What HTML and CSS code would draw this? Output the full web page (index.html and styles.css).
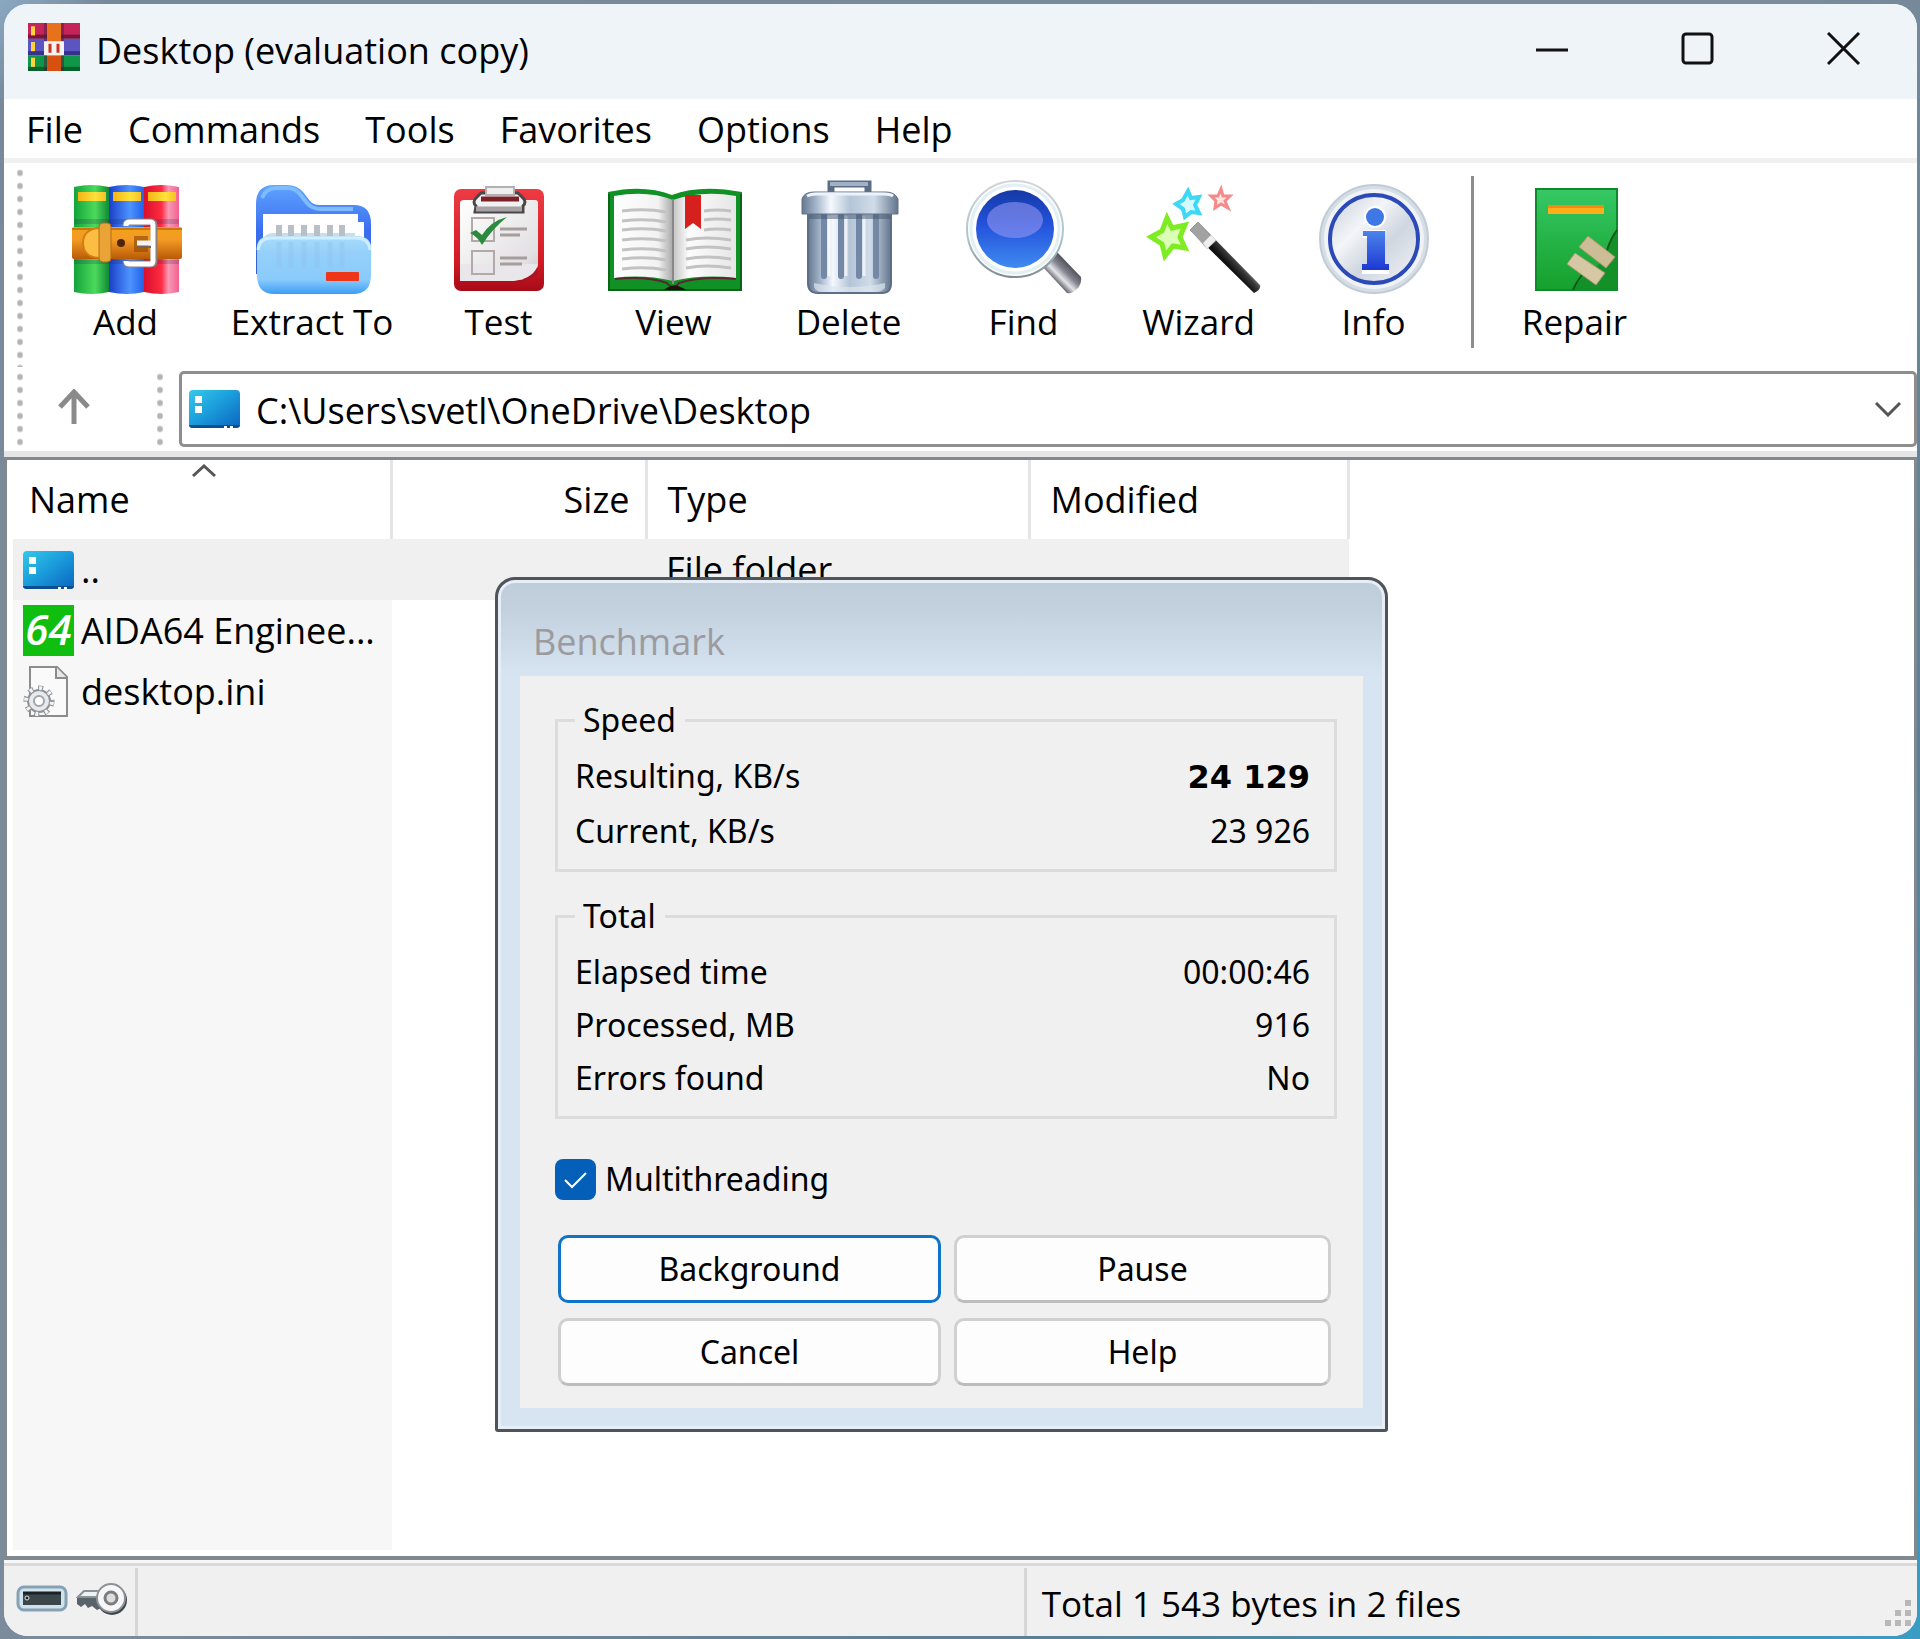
FILE: index.html
```html
<!DOCTYPE html>
<html lang="en">
<head>
    <meta charset="UTF-8">
    <meta name="viewport" content="width=device-width, initial-scale=1.0">
    <title>Desktop (evaluation copy)</title>
    <link rel="stylesheet" href="styles.css">
</head>
<body>
    <div class="window">
        <header class="title-bar">
            <svg class="app-icon" viewBox="0 0 52 58" preserveAspectRatio="none">
                <rect width="52" height="19" fill="#c4245a"/>
                <rect y="14" width="52" height="5" fill="#7d1237"/>
                <rect y="19" width="52" height="20" fill="#5a55c0"/>
                <rect y="34" width="52" height="5" fill="#37318a"/>
                <rect y="39" width="52" height="19" fill="#109648"/>
                <rect y="53" width="52" height="5" fill="#06602a"/>
                <rect x="3" y="4" width="4" height="11" fill="#ffd23c"/>
                <rect x="3" y="23" width="4" height="11" fill="#ffd23c"/>
                <rect x="3" y="42" width="4" height="11" fill="#ffd23c"/>
                <rect x="16" width="20" height="58" fill="#4a1c3c" opacity=".5"/>
                <rect x="19" width="14" height="58" fill="#e8721c"/>
                <rect x="19" y="40" width="14" height="18" fill="#d65010"/>
                <path d="M16 22h4v12h12V22h4v17H16z" fill="#f6f2f2"/>
                <path d="M20 22h12v14H20z" fill="#f6f2f2"/>
                <path d="M22 36V25M30 36V25" fill="none" stroke="#c8321e" stroke-width="3"/>
            </svg>
            <h1>Desktop (evaluation copy)</h1>
            <div class="window-buttons">
                <button type="button" aria-label="Minimize"><svg viewBox="0 0 34 34"><path d="M1 18h32"/></svg></button>
                <button type="button" aria-label="Maximize"><svg viewBox="0 0 34 34"><rect x="2" y="2" width="29" height="29" rx="3"/></svg></button>
                <button type="button" aria-label="Close"><svg viewBox="0 0 34 34"><path d="M1 1l31 31M32 1L1 32"/></svg></button>
            </div>
        </header>

        <nav class="menu">
            <button type="button">File</button>
            <button type="button">Commands</button>
            <button type="button">Tools</button>
            <button type="button">Favorites</button>
            <button type="button">Options</button>
            <button type="button">Help</button>
        </nav>

        <div class="toolbar">
            <div class="grip"></div>
            <button type="button" class="tool">
                <svg viewBox="0 0 140 115">
                    <defs>
                        <linearGradient id="bookGreen"><stop offset="0" stop-color="#12a33a"/><stop offset=".6" stop-color="#4cda5c"/><stop offset="1" stop-color="#118a35"/></linearGradient>
                        <linearGradient id="bookBlue"><stop offset="0" stop-color="#1b3fc8"/><stop offset=".6" stop-color="#4c94ff"/><stop offset="1" stop-color="#2360e8"/></linearGradient>
                        <linearGradient id="bookRed"><stop offset="0" stop-color="#d80f2c"/><stop offset=".5" stop-color="#ff2c42"/><stop offset=".7" stop-color="#f79ab8"/><stop offset="1" stop-color="#f4608c"/></linearGradient>
                        <linearGradient id="belt" x2="0" y2="1"><stop offset="0" stop-color="#f2a21c"/><stop offset=".4" stop-color="#f39a24"/><stop offset="1" stop-color="#b95a06"/></linearGradient>
                        <linearGradient id="gold" gradientUnits="userSpaceOnUse" x1="22" y1="0" x2="57" y2="0" spreadMethod="repeat"><stop offset="0" stop-color="#f4b414"/><stop offset=".5" stop-color="#ffe23c"/><stop offset="1" stop-color="#f0a818"/></linearGradient>
                    </defs>
                    <path d="M18 7q17-4 35 0v105q-17 4-35 0z" fill="url(#bookGreen)"/>
                    <path d="M53 7q17-4 35 0v105q-17 4-35 0z" fill="url(#bookBlue)"/>
                    <path d="M88 7q17-4 35 0v105q-17 4-35 0z" fill="url(#bookRed)"/>
                    <path d="M22 12h28v9H22zM57 12h28v9H57zM92 12h28v9H92z" fill="url(#gold)"/>
                    <path d="M18 44h105v-5H18zM18 80h105v4H18z" fill="#202050" opacity=".2"/>
                    <rect x="16" y="47" width="110" height="32" rx="2" fill="url(#belt)"/>
                    <path d="M16 49h110" stroke="#c87808" stroke-width="2"/>
                    <path d="M44 48c-11 0-17 6-17 15s6 15 17 15z" fill="#fbbd42" stroke="#d47c10" stroke-width="2"/>
                    <rect x="43" y="43" width="12" height="39" rx="4" fill="#eaa337" stroke="#b96b10" stroke-width="1"/>
                    <circle cx="65" cy="63" r="4" fill="#502506"/>
                    <path d="M78 56h14v16H78z" fill="#8e4306" opacity=".6"/>
                    <path d="M70 46v-1q0-3 4-3h21q3 0 3 3v36q0 3-3 3H74q-4 0-4-3" fill="none" stroke="#8c7f80" stroke-width="7"/>
                    <path d="M70 46v-1q0-3 4-3h20q3 0 3 3v36q0 3-3 3H74q-4 0-4-3" fill="none" stroke="#fff" stroke-width="5"/>
                    <path d="M81 63h15" stroke="#f4f4f4" stroke-width="5"/>
                    <path d="M81 67h14" stroke="#77625a" stroke-width="2"/>
                </svg>
                <span>Add</span>
            </button>
            <button type="button" class="tool tool-wide">
                <svg viewBox="0 0 140 115">
                    <defs>
                        <linearGradient id="folderBack" x2="0" y2="1"><stop offset="0" stop-color="#5ea4ff"/><stop offset=".5" stop-color="#3c6ff0"/><stop offset="1" stop-color="#2d5ce4"/></linearGradient>
                        <linearGradient id="folderFront" x2="0" y2="1"><stop offset="0" stop-color="#a8dcfb"/><stop offset=".3" stop-color="#94d0fa"/><stop offset=".75" stop-color="#8acbfc"/><stop offset="1" stop-color="#3c9df4"/></linearGradient>
                    </defs>
                    <path d="M14 94V24Q14 5 32 5h13q10 0 16 7l7 9q3 4 10 4h34q17 0 17 19v50z" fill="url(#folderBack)"/>
                    <path d="M20 18q4-10 14-10h11q8 0 13 6l7 9q5 6 14 6h32" fill="none" stroke="#7fbcff" stroke-width="4"/>
                    <path d="M21 34h95v8h6v25H21z" fill="#fff"/>
                    <path d="M21 60q2-7 10-7h82v12H21z" fill="#cfdbe6"/>
                    <path d="M37 45v12M49 45v12M62 45v12M75 45v12M88 45v12M100 45v12" stroke="#b9bfc6" stroke-width="6"/>
                    <path d="M15 68q0-12 14-12h85q15 0 15 12v27q0 19-18 19H32q-17 0-17-19z" fill="url(#folderFront)"/>
                    <path d="M16 70q1-12 13-12h85q13 0 14 12" fill="none" stroke="#cfeeff" stroke-width="3"/>
                    <path d="M37 62v26M49 62v26M62 62v26M75 62v26M88 62v26M100 62v26" stroke="#8fc6ee" stroke-width="5" opacity=".5"/>
                    <rect x="84" y="92" width="33" height="9" rx="1" fill="#ee3517"/>
                </svg>
                <span>Extract To</span>
            </button>
            <button type="button" class="tool">
                <svg viewBox="0 0 140 115">
                    <defs>
                        <linearGradient id="paper" x2="1" y2="1"><stop offset="0" stop-color="#fff"/><stop offset=".8" stop-color="#e2e0e2"/><stop offset="1" stop-color="#c8c4c6"/></linearGradient>
                        <linearGradient id="board" x2="0" y2="1"><stop offset="0" stop-color="#ee3b42"/><stop offset=".7" stop-color="#d31b26"/><stop offset="1" stop-color="#a70b18"/></linearGradient>
                    </defs>
                    <rect x="25" y="9" width="90" height="102" rx="7" fill="url(#board)"/>
                    <path d="M31 101V23q0-3 4-3h71q3 0 3 3v64L93 100z" fill="url(#paper)"/>
                    <path d="M109 84v10q-9 7-24 8l-54-1" fill="#7d1a20" opacity=".3"/>
                    <path d="M31 84h78q-3 14-24 17H31z" fill="#e9e7e9"/>
                    <path d="M47 26q-4-4 0-8l5-5h37l5 5q4 4 0 8v6H46z" fill="#f1f1f1" stroke="#4b4648" stroke-width="3"/>
                    <path d="M52 19h38" stroke="#7e2028" stroke-width="5"/>
                    <path d="M57 7h28v8H57z" fill="#efefef" stroke="#b2b0b2" stroke-width="2"/>
                    <path d="M47 29h46" stroke="#a5a1a4" stroke-width="5"/>
                    <path d="M43 38h22v23H43zM43 71h22v23H43z" fill="none" stroke="#b3a9aa" stroke-width="2"/>
                    <path d="M71 49h27M71 55h20M71 78h27M71 84h22" stroke="#a79c9e" stroke-width="3"/>
                    <path d="M41 53l6-3 6 5Q62 41 78 37 63 49 53 65q-4-8-12-12z" fill="#2c8a3e"/>
                </svg>
                <span>Test</span>
            </button>
            <button type="button" class="tool">
                <svg viewBox="0 0 140 115">
                    <defs>
                        <linearGradient id="pageLeft"><stop offset="0" stop-color="#fff"/><stop offset=".75" stop-color="#f2f2f2"/><stop offset="1" stop-color="#a8a8a8"/></linearGradient>
                        <linearGradient id="pageRight"><stop offset="0" stop-color="#c4c4c4"/><stop offset=".25" stop-color="#fcfcfc"/><stop offset="1" stop-color="#e6e6e6"/></linearGradient>
                    </defs>
                    <path d="M4 12q36-8 64 3 28-11 70-3v99H4z" fill="#119125"/>
                    <path d="M5 14v97M137 14v97M4 110h134" stroke="#0a6417" stroke-width="2"/>
                    <path d="M10 16q34-6 59 4v81q-30-7-59-3z" fill="url(#pageLeft)"/>
                    <path d="M132 16q-34-6-63 4v81q30-7 63-3z" fill="url(#pageRight)"/>
                    <path d="M11 99q32-3 52 4 3 4 6 4t6-4q22-7 57-4" fill="none" stroke="#5b2630" stroke-width="2"/>
                    <path d="M60 110q10-9 22 0z" fill="#24100e"/>
                    <path d="M69 19v85" stroke="#888" stroke-width="2"/>
                    <path d="M18 31q24-3 44 1M18 41q24-3 44 1M18 50q24-3 44 1M18 60q24-3 44 1M18 70q24-3 44 1M18 79q24-3 44 1M18 89q24-3 44 1M100 31q12-2 27 0M100 40q12-2 27 0M100 50q12-2 27 0M82 60q20-4 45 0M82 69q20-4 45 0M82 79q20-4 45 0M82 88q20-4 45 0" fill="none" stroke="#c2c2c2" stroke-width="3"/>
                    <path d="M81 15h16v34l-8-6-8 6z" fill="#d6201d"/>
                </svg>
                <span>View</span>
            </button>
            <button type="button" class="tool">
                <svg viewBox="0 0 140 115">
                    <defs>
                        <linearGradient id="metal"><stop offset="0" stop-color="#64788f"/><stop offset=".15" stop-color="#a5b6cb"/><stop offset=".3" stop-color="#f5f9fd"/><stop offset=".5" stop-color="#b4c4d7"/><stop offset=".75" stop-color="#d0dce9"/><stop offset="1" stop-color="#63758d"/></linearGradient>
                    </defs>
                    <path d="M52 13V4h37v9" fill="none" stroke="#5b6d85" stroke-width="7"/>
                    <path d="M51 4h38" stroke="#a2b2c6" stroke-width="4"/>
                    <path d="M29 33h83v70q0 10-9 10H39q-10 0-10-10z" fill="url(#metal)" stroke="#5d6f88" stroke-width="2"/>
                    <path d="M35 103q36 8 71 0v5q-4 4-10 4H44q-7 0-9-5z" fill="#dce5ef" opacity=".7"/>
                    <path d="M45 34v62M62 34v62M80 34v62M97 34v62" stroke="#7388a5" stroke-width="6" stroke-linecap="round"/>
                    <path d="M50 36v60M67 36v60M85 36v60" stroke="#fff" stroke-width="3" opacity=".7"/>
                    <path d="M30 32h81v7H30z" fill="#44566e" opacity=".5"/>
                    <path d="M23 19q2-7 12-7h72q9 0 12 7v15H23z" fill="url(#metal)" stroke="#61738a" stroke-width="1"/>
                    <path d="M28 16q4-2 9-2h68q6 0 9 2" stroke="#eef3f9" stroke-width="3" fill="none"/>
                </svg>
                <span>Delete</span>
            </button>
            <button type="button" class="tool">
                <svg viewBox="0 0 140 115">
                    <defs>
                        <linearGradient id="lens" x2="0" y2="1"><stop offset="0" stop-color="#1439a8"/><stop offset=".45" stop-color="#2452dc"/><stop offset="1" stop-color="#3f8bf0"/></linearGradient>
                        <linearGradient id="lensRim" x2="0" y2="1"><stop offset="0" stop-color="#d4d4d8"/><stop offset=".6" stop-color="#a9c5ce"/><stop offset="1" stop-color="#848c92"/></linearGradient>
                        <linearGradient id="handle" gradientUnits="userSpaceOnUse" x1="122" y1="90" x2="106" y2="106"><stop offset="0" stop-color="#4b4b55"/><stop offset=".4" stop-color="#85858f"/><stop offset=".7" stop-color="#e4e4ea"/><stop offset="1" stop-color="#606069"/></linearGradient>
                    </defs>
                    <path d="M87 85l15-14 25 26q1 7-4 12t-10 4z" fill="url(#handle)"/>
                    <circle cx="61" cy="49" r="48" fill="#fdfefe" stroke="url(#lensRim)" stroke-width="2"/>
                    <circle cx="61" cy="49" r="44" fill="#fff" stroke="#e2eff3" stroke-width="3"/>
                    <circle cx="61" cy="49" r="39" fill="url(#lens)"/>
                    <ellipse cx="61" cy="40" rx="28" ry="18" fill="#9c9cf0" opacity=".55"/>
                </svg>
                <span>Find</span>
            </button>
            <button type="button" class="tool">
                <svg viewBox="0 0 140 115">
                    <defs>
                        <linearGradient id="wand" gradientUnits="userSpaceOnUse" x1="100" y1="68" x2="91" y2="76"><stop offset="0" stop-color="#7c7c7c"/><stop offset=".4" stop-color="#3a3a3a"/><stop offset="1" stop-color="#111"/></linearGradient>
                    </defs>
                    <path d="M61 50l8-8 62 63q1 5-6 8z" fill="url(#wand)"/>
                    <path d="M61 50l8-8 18 19-9 8z" fill="#a2a2a2"/>
                    <path d="M74 63l8-8 5 5-9 9z" fill="#eee"/>
                    <path d="M38 38l5 10 13-3-5 12 5 11-12-2-8 10-3-12-11-7 11-6z" fill="#dcffb8" stroke="#7eec22" stroke-width="5"/>
                    <path d="M59 11l3 7 8-1-4 8 4 8-8-1-6 5-2-8-7-5 7-4z" fill="#d5faff" stroke="#3cd8f5" stroke-width="4"/>
                    <path d="M92 9l2 7h7l-5 5 3 7-7-4-6 4 1-7-5-5h7z" fill="#ffe4e4" stroke="#f48a8a" stroke-width="3"/>
                </svg>
                <span>Wizard</span>
            </button>
            <button type="button" class="tool">
                <svg viewBox="0 0 140 115">
                    <defs>
                        <linearGradient id="infoPlate" x2="1" y2="1"><stop offset="0" stop-color="#c9d0da"/><stop offset=".35" stop-color="#f3f5f8"/><stop offset=".6" stop-color="#cfd6df"/><stop offset="1" stop-color="#f4f6f8"/></linearGradient>
                        <linearGradient id="infoMark" x2="0" y2="1"><stop offset="0" stop-color="#4c84ec"/><stop offset="1" stop-color="#1d38d2"/></linearGradient>
                    </defs>
                    <circle cx="70" cy="59" r="54" fill="#d5dde5" stroke="#c2ccd6" stroke-width="2"/>
                    <circle cx="70" cy="59" r="50" fill="#eff3f6"/>
                    <circle cx="70" cy="59" r="44" fill="url(#infoPlate)" stroke="#2b4ab8" stroke-width="4"/>
                    <circle cx="71" cy="37" r="11" fill="#fff"/>
                    <circle cx="71" cy="37" r="9" fill="#3f78e4"/>
                    <path d="M59 50h22v35h4v9H58v-8h5V58h-4z" fill="#fff"/>
                    <path d="M59 51h22v33h4v6H58v-6h5V56h-4z" fill="url(#infoMark)"/>
                </svg>
                <span>Info</span>
            </button>
            <div class="tool-divider"></div>
            <button type="button" class="tool">
                <svg viewBox="0 0 140 115">
                    <defs>
                        <linearGradient id="repairBook" x2="0" y2="1"><stop offset="0" stop-color="#35c865"/><stop offset="1" stop-color="#16a02c"/></linearGradient>
                    </defs>
                    <rect x="31" y="9" width="81" height="101" fill="url(#repairBook)" stroke="#0f8a2c" stroke-width="2"/>
                    <path d="M43 25h56v9H43z" fill="#ffae17"/>
                    <path d="M43 25h56v3H43z" fill="#f28a12"/>
                    <path d="M112 50q-6 8-10 20-5 15-20 24-9 6-13 16h43z" fill="#149028"/>
                    <path d="M112 50q-6 8-10 20M82 90q-9 8-14 20" fill="none" stroke="#0a5a18" stroke-width="2"/>
                    <path d="M83 56l27 21-9 11-27-21z" fill="#cdbd97" stroke="#a9976c" stroke-width="1"/>
                    <path d="M70 73l30 20-9 12-29-21z" fill="#d6c8a4" stroke="#a9976c" stroke-width="1"/>
                </svg>
                <span>Repair</span>
            </button>
        </div>

        <div class="address-bar">
            <div class="grip"></div>
            <button type="button" class="up" aria-label="Up one level">
                <svg viewBox="0 0 32 36"><path d="M16 35V3M2 18L16 3l14 15"/></svg>
            </button>
            <div class="grip"></div>
            <div class="path-box">
                <svg class="folder-icon" viewBox="0 0 51 38">
                    <defs>
                        <linearGradient id="desk" x2="1" y2="1"><stop offset="0" stop-color="#35c9ea"/><stop offset=".45" stop-color="#1c9fdc"/><stop offset="1" stop-color="#0a64c0"/></linearGradient>
                    </defs>
                    <rect width="51" height="38" rx="4" fill="url(#desk)"/>
                    <path d="M0 35h51q0 3-4 3H4q-4 0-4-3z" fill="#0b4f93"/>
                    <path d="M6 6h7v7H6zM6 16h7v7H6z" fill="#fff"/>
                    <path d="M35 36h3v2h-3zM41 36h3v2h-3z" fill="#fff"/>
                </svg>
                <select aria-label="Path">
                    <option>C:\Users\svetl\OneDrive\Desktop</option>
                </select>
                <svg class="chevron" viewBox="0 0 28 16"><path d="M2 2l12 12L26 2"/></svg>
            </div>
        </div>

        <main class="file-list">
            <table>
                <thead>
                    <tr>
                        <th class="col-name">Name
                            <svg class="sort-mark" viewBox="0 0 26 14"><path d="M2 12L13 2l11 10"/></svg>
                        </th>
                        <th class="col-size">Size</th>
                        <th class="col-type">Type</th>
                        <th class="col-modified">Modified</th>
                    </tr>
                </thead>
                <tbody>
                    <tr class="current">
                        <td>
                            <div class="file-name">
                                <svg class="folder-icon" viewBox="0 0 51 38">
                                    <rect width="51" height="38" rx="4" fill="url(#desk)"/>
                                    <path d="M0 35h51q0 3-4 3H4q-4 0-4-3z" fill="#0b4f93"/>
                                    <path d="M6 6h7v7H6zM6 16h7v7H6z" fill="#fff"/>
                                    <path d="M35 36h3v2h-3zM41 36h3v2h-3z" fill="#fff"/>
                                </svg>
                                <span>..</span>
                            </div>
                        </td>
                        <td></td>
                        <td>File folder</td>
                        <td></td>
                    </tr>
                    <tr>
                        <td>
                            <div class="file-name">
                                <span class="icon-64">64</span>
                                <span>AIDA64 Enginee...</span>
                            </div>
                        </td>
                        <td></td>
                        <td></td>
                        <td></td>
                    </tr>
                    <tr>
                        <td>
                            <div class="file-name">
                                <svg class="ini-icon" viewBox="0 0 51 51">
                                    <path d="M7 1h27l10 10v39H7z" fill="#fafafa" stroke="#8c8c8c" stroke-width="2"/>
                                    <path d="M33 1v11h11" fill="#e8e8e8" stroke="#8c8c8c" stroke-width="2"/>
                                    <circle cx="16" cy="35" r="13" fill="none" stroke="#8d9296" stroke-width="5" stroke-dasharray="5 5"/>
                                    <circle cx="16" cy="35" r="11" fill="#e6eaec" stroke="#8d9296" stroke-width="2"/>
                                    <circle cx="16" cy="35" r="13" fill="none" stroke="#f0f2f3" stroke-width="4" stroke-dasharray="3 7" stroke-dashoffset="-1"/>
                                    <circle cx="16" cy="35" r="5" fill="#fff" stroke="#a0a5a8" stroke-width="2"/>
                                </svg>
                                <span>desktop.ini</span>
                            </div>
                        </td>
                        <td></td>
                        <td></td>
                        <td></td>
                    </tr>
                </tbody>
            </table>
        </main>

        <footer class="status-bar">
            <div class="status-icons">
                <svg viewBox="0 0 52 34">
                    <rect x="2" y="5" width="48" height="23" rx="6" fill="#cfe3ee" stroke="#86a1b2" stroke-width="3"/>
                    <rect x="7" y="10" width="38" height="13" fill="#3c474c"/>
                    <path d="M7 11h38" stroke="#1a2226" stroke-width="3"/>
                    <circle cx="11" cy="16" r="2" fill="#1a2226" stroke="#dfe6ea" stroke-width="1"/>
                </svg>
                <svg viewBox="0 0 52 34">
                    <path d="M26 9H8l-7 7v6l4 3 4-3 3 4 4-2 5 4 8-4z" fill="#59646a"/>
                    <path d="M27 9H8l-6 6h26z" fill="#e9f3f6" stroke="#8b9194" stroke-width="2"/>
                    <circle cx="36" cy="18" r="15" fill="#3c474c"/>
                    <circle cx="35" cy="16" r="14" fill="#f7f7f7" stroke="#8f9294" stroke-width="2"/>
                    <circle cx="35" cy="16" r="6" fill="#ddd" stroke="#7d7d7d" stroke-width="3"/>
                </svg>
            </div>
            <div class="status-selected"></div>
            <div class="status-total">Total 1 543 bytes in 2 files</div>
            <svg class="resize-grip" viewBox="0 0 28 28">
                <path d="M20 0h6v6h-6zM10 10h6v6h-6zM20 10h6v6h-6zM0 20h6v6H0zM10 20h6v6h-6zM20 20h6v6h-6z"/>
            </svg>
        </footer>
    </div>

    <div class="dialog" role="dialog" aria-labelledby="dialog-title">
        <h2 id="dialog-title">Benchmark</h2>
        <form class="dialog-body">
            <fieldset>
                <legend>Speed</legend>
                <dl>
                    <dt>Resulting, KB/s</dt>
                    <dd><strong>24 129</strong></dd>
                    <dt>Current, KB/s</dt>
                    <dd>23 926</dd>
                </dl>
            </fieldset>
            <fieldset>
                <legend>Total</legend>
                <dl>
                    <dt>Elapsed time</dt>
                    <dd>00:00:46</dd>
                    <dt>Processed, MB</dt>
                    <dd>916</dd>
                    <dt>Errors found</dt>
                    <dd>No</dd>
                </dl>
            </fieldset>
            <div class="check-row">
                <span class="check-box">
                    <input type="checkbox" id="multithreading" checked>
                    <svg viewBox="0 0 41 41"><path d="M10 21l7 7 14-14"/></svg>
                </span>
                <label for="multithreading">Multithreading</label>
            </div>
            <div class="dialog-buttons">
                <button type="button" class="default">Background</button>
                <button type="button">Pause</button>
                <button type="button">Cancel</button>
                <button type="button">Help</button>
            </div>
        </form>
    </div>
</body>
</html>
```

FILE: styles.css
```css
* {
    box-sizing: border-box;
}

body {
    margin: 0;
    padding: 4px 3px 3px 4px;
    min-height: 100vh;
    display: flex;
    background: linear-gradient(135deg, #8aa9c2 0, #78899a 3%, #7b8b9b 50%, #5a8098 75%, #3a9cc4 100%);
    font-family: "Open Sans", "Noto Sans", sans-serif;
    font-size: 36px;
    line-height: 48px;
    color: #000;
}

button,
select {
    margin: 0;
    padding: 0;
    border: none;
    background: none;
    font: inherit;
    color: inherit;
}

svg {
    display: block;
    flex: none;
}

.window {
    flex: 1;
    min-width: 0;
    display: flex;
    flex-direction: column;
    background-color: #fff;
    border-radius: 24px;
    overflow: hidden;
}

/* title bar */
.title-bar {
    display: flex;
    height: 95px;
    padding-left: 24px;
    background-color: #eff4f9;
}

.app-icon {
    width: 52px;
    height: 48px;
    margin-top: 19px;
}

.title-bar h1 {
    margin: 23px 0 0 16px;
    font-size: 36px;
    font-weight: normal;
}

.window-buttons {
    display: flex;
    margin-left: auto;
}

.window-buttons button {
    width: 146px;
    height: 90px;
    display: flex;
    align-items: center;
    justify-content: center;
}

.window-buttons svg {
    width: 34px;
    height: 34px;
    fill: none;
    stroke: #111;
    stroke-width: 3;
}

/* menu */
.menu {
    display: flex;
    align-items: center;
    gap: 45px;
    height: 64px;
    padding: 3px 22px 0;
    border-bottom: 5px solid #f0f0f0;
}

/* toolbar */
.toolbar {
    display: flex;
    height: 204px;
    padding-left: 13px;
    font-size: 35px;
}

.grip {
    width: 6px;
    margin-top: 4px;
    background: radial-gradient(circle at 3px 6px, #b4b4b4 2px, transparent 4px) 0 0 / 6px 13px repeat-y;
}

.tool {
    width: 175px;
    padding-top: 17px;
    display: flex;
    flex-direction: column;
    align-items: center;
    gap: 3px;
}

.grip + .tool {
    margin-left: 15px;
}

.tool-wide {
    width: 198px;
}

.tool svg {
    width: 140px;
    height: 115px;
}

.tool-divider {
    width: 3px;
    height: 172px;
    margin: 13px 13px 0 10px;
    background-color: #8c8c8c;
}

/* address bar */
.address-bar {
    display: flex;
    height: 90px;
    padding-left: 13px;
    border-bottom: 6px solid #e6e6e6;
}

.up {
    width: 134px;
    padding: 0 0 4px 35px;
}

.up svg {
    width: 32px;
    height: 36px;
    fill: none;
    stroke: #8a8a8a;
    stroke-width: 5;
}

.path-box {
    flex: 1;
    display: flex;
    align-items: center;
    height: 76px;
    margin: 4px 0 0 16px;
    padding: 0 12px 0 7px;
    border: 3px solid #8e8e8e;
    border-radius: 5px;
}

.folder-icon {
    width: 51px;
    height: 38px;
}

.path-box select {
    flex: 1;
    height: 60px;
    margin-left: 16px;
    padding-top: 4px;
    appearance: none;
}

.chevron,
.sort-mark {
    fill: none;
    stroke: #555;
    stroke-width: 3;
}

.chevron {
    width: 28px;
    height: 16px;
}

/* file list */
.file-list {
    flex: 1;
    border: 3px solid #808890;
    border-bottom-width: 4px;
    padding: 0 6px;
    background: linear-gradient(#f7f7f7, #f7f7f7) 6px 0 / 379px calc(100% - 6px) no-repeat;
}

table {
    width: 1337px;
    table-layout: fixed;
    border-collapse: collapse;
}

th {
    position: relative;
    height: 79px;
    padding: 1px 20px 0;
    background-color: #fff;
    border-right: 3px solid #e5e5e5;
    font-weight: normal;
    text-align: left;
}

.col-name {
    width: 378px;
    padding-left: 16px;
}

.col-size {
    width: 255px;
    padding-right: 15px;
    text-align: right;
}

.col-type {
    width: 383px;
}

.sort-mark {
    position: absolute;
    top: 4px;
    left: 50%;
    width: 26px;
    height: 14px;
    margin-left: -10px;
}

td {
    height: 61px;
    padding: 0 20px;
}

td:first-child {
    padding: 0 0 0 10px;
}

.current {
    background-color: #f0f0f0;
}

.file-name {
    display: flex;
    align-items: center;
    gap: 7px;
    white-space: nowrap;
}

.icon-64 {
    width: 51px;
    height: 51px;
    background-color: #0fbe0f;
    color: #fff;
    font-size: 42px;
    font-style: italic;
    font-weight: 600;
    text-align: center;
}

.ini-icon {
    width: 51px;
    height: 51px;
}

/* status bar */
.status-bar {
    display: flex;
    height: 76px;
    padding-top: 8px;
    background: linear-gradient(#f7f7f7 3px, #d9d9d9 3px, #d9d9d9 6px, #f0f0f0 6px);
    font-size: 35px;
    line-height: 72px;
}

.status-icons {
    display: flex;
    gap: 8px;
    width: 134px;
    padding: 14px 0 0 12px;
    border-right: 3px solid #d6d6d6;
}

.status-icons svg {
    width: 52px;
    height: 34px;
}

.status-selected {
    flex: 895;
    border-right: 3px solid #d6d6d6;
}

.status-total {
    flex: 846;
    padding-left: 15px;
}

.resize-grip {
    width: 28px;
    height: 28px;
    margin: 32px 4px 0 6px;
    fill: #b8b8b8;
}

/* benchmark dialog, floats over the window */
.dialog {
    position: absolute;
    top: 577px;
    left: 495px;
    width: 893px;
    padding: 0 22px 21px;
    border: 3px solid #505357;
    border-radius: 20px 20px 3px 3px;
    background: linear-gradient(#bfcddb 0, #c3d0de 30px, #d7e4f1 96px);
    box-shadow: inset 0 0 0 3px #e6eef7;
    font-family: "Noto Sans", sans-serif;
    font-size: 32px;
}

.dialog h2 {
    margin: 0;
    padding: 38px 13px 10px;
    font-family: "Open Sans", sans-serif;
    font-size: 36px;
    font-weight: normal;
    color: #9b9b9f;
}

.dialog-body {
    padding: 22px 26px 22px 35px;
    background-color: #f0f0f0;
}

fieldset {
    min-width: 0;
    margin: 0 0 22px;
    padding: 0 24px 0 17px;
    border: 3px solid #dcdcdc;
}

legend {
    padding: 0 9px 0 8px;
    line-height: 44px;
}

dl {
    display: grid;
    grid-template-columns: 1fr auto;
    line-height: 53px;
    margin: 0;
    padding: 7px 0 12px;
}

dd {
    margin: 0;
    text-align: right;
}

dd strong {
    font-family: "DejaVu Sans", sans-serif;
}

.check-row {
    display: flex;
    align-items: center;
    gap: 9px;
    margin-top: 36px;
}

.check-box {
    position: relative;
    width: 41px;
    height: 41px;
}

.check-box input {
    appearance: none;
    display: block;
    width: 41px;
    height: 41px;
    margin: 0;
    border-radius: 8px;
    background-color: #045fb8;
}

/* tick drawn over the box */
.check-box svg {
    position: absolute;
    inset: 0;
    fill: none;
    stroke: #fff;
    stroke-width: 2;
    pointer-events: none;
}

.check-box input:not(:checked) + svg {
    display: none;
}

.dialog-buttons {
    display: grid;
    grid-template-columns: 382fr 376fr;
    gap: 15px 13px;
    margin-top: 32px;
    padding: 0 6px 0 3px;
}

.dialog-buttons button {
    height: 68px;
    border: 3px solid #d0d0d0;
    border-bottom-color: #bdbdbd;
    border-radius: 10px;
    background-color: #fdfdfd;
}

.dialog-buttons .default {
    border-color: #0f74c8;
}
```
